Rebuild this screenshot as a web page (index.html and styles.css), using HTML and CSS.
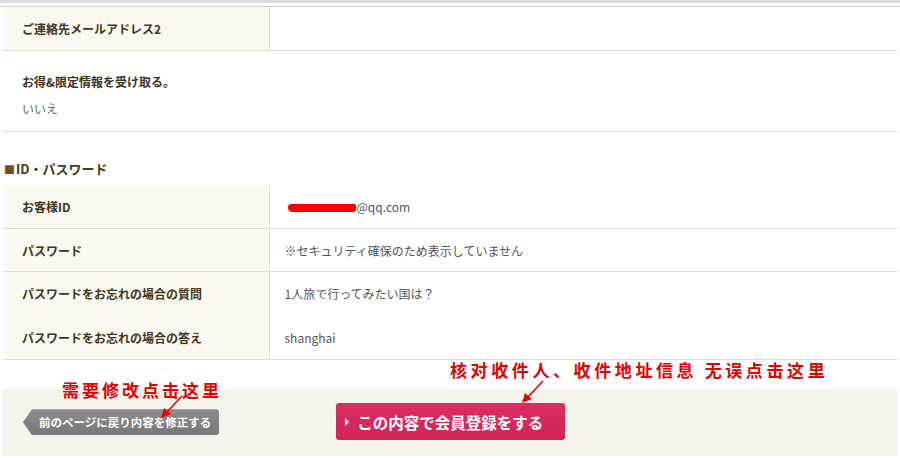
FILE: index.html
```html
<!DOCTYPE html>
<html lang="ja">
  <head>
    <meta charset="UTF-8" />
    <title>会員登録内容の確認</title>
    <link rel="stylesheet" href="styles.css">
  </head>
  <body>
    <div class="topbar"></div>
    <div class="container">
      <table class="confirm-table">
        <tr>
          <th>ご連絡先メールアドレス2</th>
          <td></td>
        </tr>
      </table>

      <div class="block">
        <p class="block-label">お得&amp;限定情報を受け取る。</p>
        <p class="block-value">いいえ</p>
      </div>

      <h2 class="section-title"><span class="mark">■</span>ID・パスワード</h2>
      <table class="confirm-table tall">
        <tr>
          <th>お客様ID</th>
          <td><span class="redacted"></span>@qq.com</td>
        </tr>
        <tr>
          <th>パスワード</th>
          <td>※セキュリティ確保のため表示していません</td>
        </tr>
        <tr class="no-line">
          <th>パスワードをお忘れの場合の質問</th>
          <td>1人旅で行ってみたい国は？</td>
        </tr>
        <tr>
          <th>パスワードをお忘れの場合の答え</th>
          <td>shanghai</td>
        </tr>
      </table>

      <div class="spacer"></div>

      <div class="actions">
        <a href="#" class="btn-back">前のページに戻り内容を修正する</a>
        <a href="#" class="btn-submit"><span class="tri"></span>この内容で会員登録をする</a>

        <!-- annotations drawn on top of the screenshot -->
        <div class="note note-left">需要修改点击这里</div>
        <div class="note note-right">核对收件人、收件地址信息 无误点击这里</div>
        <svg class="arrow arrow-left" width="30" height="26" viewBox="0 0 30 26">
          <path d="M24 2 L8 19" stroke="#e00" stroke-width="1.6" fill="none" />
          <path d="M3 24 L6 14 L13 20 Z" fill="#e00" />
        </svg>
        <svg class="arrow arrow-right" width="30" height="26" viewBox="0 0 30 26">
          <path d="M24 2 L8 19" stroke="#e00" stroke-width="1.6" fill="none" />
          <path d="M3 24 L6 14 L13 20 Z" fill="#e00" />
        </svg>
      </div>
    </div>
  </body>
</html>
```

FILE: styles.css
```css
body {
  margin: 0;
  padding: 0;
  background-color: #fff;
  font-family: "Noto Sans CJK JP", "Liberation Sans", sans-serif;
  font-size: 12px;
  color: #555;
}
.topbar {
  height: 3px;
  background-color: #dcdcdc;
  border-bottom: 3px solid #fff;
  box-shadow: 0 1px 0 #cfcfcf;
  margin-bottom: 1px;
}
.container {
  margin: 0 3px;
}
.confirm-table {
  width: 100%;
  border-collapse: collapse;
}
.confirm-table th {
  width: 266px;
  height: 43px;
  padding: 0 0 0 19px;
  text-align: left;
  font-weight: bold;
  color: #3f3522;
  background-color: #faf8f1;
  border-right: 1px solid #e2ddd0;
  border-bottom: 1px solid #e2ddd0;
  box-sizing: border-box;
}
.confirm-table.tall th {
  height: 43.7px;
}
.confirm-table td {
  padding: 0 0 0 15px;
  color: #555;
  border-bottom: 1px solid #e2ddd0;
}
.confirm-table tr.no-line th,
.confirm-table tr.no-line td {
  border-bottom-color: transparent;
}
.block {
  padding: 23px 0 14px 19px;
  border-bottom: 1px solid #e2ddd0;
}
.block p {
  margin: 0;
}
.block-label {
  font-weight: bold;
  color: #3f3522;
  line-height: 16px;
}
.block-value {
  margin-top: 11px !important;
  line-height: 16px;
  color: #666;
}
.section-title {
  margin: 0;
  padding: 27px 0 6px 1px;
  font-size: 13px;
  line-height: 20px;
  color: #4a3a18;
  font-weight: bold;
}
.section-title .mark {
  color: #6b4f1d;
  font-size: 11px;
  margin-right: 1px;
}
.redacted {
  display: inline-block;
  width: 68px;
  height: 8px;
  background-color: #f00;
  border-radius: 4px 2px 3px 5px;
  vertical-align: middle;
  margin-left: 3px;
  margin-right: 1px;
}
.spacer {
  height: 29px;
}
.actions {
  position: relative;
  display: flex;
  align-items: center;
  height: 67px;
  padding-left: 20px;
  background-color: #f6f3ec;
}
.btn-back {
  display: flex;
  align-items: center;
  height: 26px;
  padding: 0 8px 0 16px;
  color: #fff;
  font-weight: bold;
  font-size: 11.5px;
  text-decoration: none;
  background: linear-gradient(#8c8c8c, #787878);
  border-radius: 3px;
  clip-path: polygon(9px 0, 100% 0, 100% 100%, 9px 100%, 0 50%);
}
.btn-submit {
  display: flex;
  align-items: center;
  height: 37px;
  width: 229px;
  margin-left: 117px;
  margin-bottom: 1px;
  box-sizing: border-box;
  padding-left: 9px;
  color: #fff;
  font-weight: bold;
  font-size: 15.5px;
  text-decoration: none;
  background: linear-gradient(#dc2d62, #d2245a);
  border-radius: 3px;
}
.btn-submit .tri {
  width: 0;
  height: 0;
  border-left: 4px solid #fff;
  border-top: 4px solid transparent;
  border-bottom: 4px solid transparent;
  margin-right: 8px;
}
.note {
  position: absolute;
  color: #e60000;
  font-family: "Noto Sans CJK SC", sans-serif;
  font-weight: bold;
  font-size: 17px;
  letter-spacing: 3px;
  line-height: 20px;
  white-space: nowrap;
}
.note-left {
  left: 59px;
  top: -9px;
}
.note-right {
  left: 447px;
  top: -29px;
  letter-spacing: 3.6px;
}
.arrow {
  position: absolute;
}
.arrow-left {
  left: 155px;
  top: 5px;
}
.arrow-right {
  left: 516px;
  top: -10px;
}
```
